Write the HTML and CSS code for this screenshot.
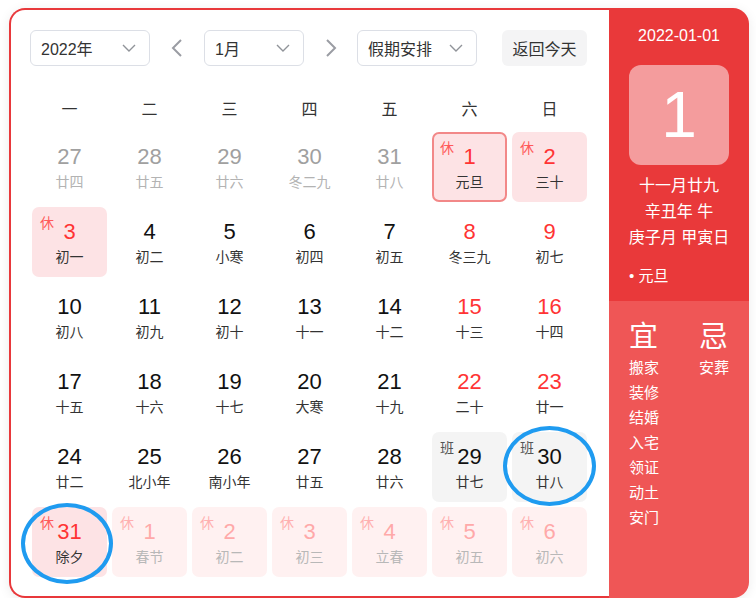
FILE: index.html
```html
<!DOCTYPE html>
<html lang="zh-CN">
<head>
<meta charset="utf-8">
<title>万年历</title>
<link rel="stylesheet" href="styles.css">
</head>
<body>
<div class="calendar">
  <div class="main">
    <div class="toolbar">
      <div class="select sel-year"><span>2022年</span><svg class="chev" width="14" height="8" viewBox="0 0 14 8"><path d="M1 1 L7 7 L13 1" fill="none" stroke="#909399" stroke-width="1.4"/></svg></div>
      <div class="arrow"><svg width="12" height="18" viewBox="0 0 12 18"><path d="M10 1 L2 9 L10 17" fill="none" stroke="#9a9ca3" stroke-width="2"/></svg></div>
      <div class="select sel-month"><span>1月</span><svg class="chev" width="14" height="8" viewBox="0 0 14 8"><path d="M1 1 L7 7 L13 1" fill="none" stroke="#909399" stroke-width="1.4"/></svg></div>
      <div class="arrow next-arrow"><svg width="12" height="18" viewBox="0 0 12 18"><path d="M2 1 L10 9 L2 17" fill="none" stroke="#9a9ca3" stroke-width="2"/></svg></div>
      <div class="select sel-holiday"><span>假期安排</span><svg class="chev" width="14" height="8" viewBox="0 0 14 8"><path d="M1 1 L7 7 L13 1" fill="none" stroke="#909399" stroke-width="1.4"/></svg></div>
      <div class="today-btn">返回今天</div>
    </div>
    <div class="weekdays">
      <span>一</span><span>二</span><span>三</span><span>四</span><span>五</span><span>六</span><span>日</span>
    </div>
    <div class="grid">
      <div class="cell other"><div class="num">27</div><div class="lunar">廿四</div></div>
      <div class="cell other"><div class="num">28</div><div class="lunar">廿五</div></div>
      <div class="cell other"><div class="num">29</div><div class="lunar">廿六</div></div>
      <div class="cell other"><div class="num">30</div><div class="lunar">冬二九</div></div>
      <div class="cell other"><div class="num">31</div><div class="lunar">廿八</div></div>
      <div class="cell rest selected"><span class="tag">休</span><div class="num red">1</div><div class="lunar">元旦</div></div>
      <div class="cell rest"><span class="tag">休</span><div class="num red">2</div><div class="lunar">三十</div></div>

      <div class="cell rest"><span class="tag">休</span><div class="num red">3</div><div class="lunar">初一</div></div>
      <div class="cell"><div class="num">4</div><div class="lunar">初二</div></div>
      <div class="cell"><div class="num">5</div><div class="lunar">小寒</div></div>
      <div class="cell"><div class="num">6</div><div class="lunar">初四</div></div>
      <div class="cell"><div class="num">7</div><div class="lunar">初五</div></div>
      <div class="cell"><div class="num red">8</div><div class="lunar">冬三九</div></div>
      <div class="cell"><div class="num red">9</div><div class="lunar">初七</div></div>

      <div class="cell"><div class="num">10</div><div class="lunar">初八</div></div>
      <div class="cell"><div class="num">11</div><div class="lunar">初九</div></div>
      <div class="cell"><div class="num">12</div><div class="lunar">初十</div></div>
      <div class="cell"><div class="num">13</div><div class="lunar">十一</div></div>
      <div class="cell"><div class="num">14</div><div class="lunar">十二</div></div>
      <div class="cell"><div class="num red">15</div><div class="lunar">十三</div></div>
      <div class="cell"><div class="num red">16</div><div class="lunar">十四</div></div>

      <div class="cell"><div class="num">17</div><div class="lunar">十五</div></div>
      <div class="cell"><div class="num">18</div><div class="lunar">十六</div></div>
      <div class="cell"><div class="num">19</div><div class="lunar">十七</div></div>
      <div class="cell"><div class="num">20</div><div class="lunar">大寒</div></div>
      <div class="cell"><div class="num">21</div><div class="lunar">十九</div></div>
      <div class="cell"><div class="num red">22</div><div class="lunar">二十</div></div>
      <div class="cell"><div class="num red">23</div><div class="lunar">廿一</div></div>

      <div class="cell"><div class="num">24</div><div class="lunar">廿二</div></div>
      <div class="cell"><div class="num">25</div><div class="lunar">北小年</div></div>
      <div class="cell"><div class="num">26</div><div class="lunar">南小年</div></div>
      <div class="cell"><div class="num">27</div><div class="lunar">廿五</div></div>
      <div class="cell"><div class="num">28</div><div class="lunar">廿六</div></div>
      <div class="cell work"><span class="tag">班</span><div class="num">29</div><div class="lunar">廿七</div></div>
      <div class="cell work"><span class="tag">班</span><div class="num">30</div><div class="lunar">廿八</div></div>

      <div class="cell rest"><span class="tag">休</span><div class="num red">31</div><div class="lunar">除夕</div></div>
      <div class="cell rest next"><span class="tag">休</span><div class="num">1</div><div class="lunar">春节</div></div>
      <div class="cell rest next"><span class="tag">休</span><div class="num">2</div><div class="lunar">初二</div></div>
      <div class="cell rest next"><span class="tag">休</span><div class="num">3</div><div class="lunar">初三</div></div>
      <div class="cell rest next"><span class="tag">休</span><div class="num">4</div><div class="lunar">立春</div></div>
      <div class="cell rest next"><span class="tag">休</span><div class="num">5</div><div class="lunar">初五</div></div>
      <div class="cell rest next"><span class="tag">休</span><div class="num">6</div><div class="lunar">初六</div></div>

      <div class="ring ring-a"></div>
      <div class="ring ring-b"></div>
    </div>
  </div>
  <div class="side">
    <div class="side-top">
      <div class="date">2022-01-01</div>
      <div class="bigday">1</div>
      <div class="lunar-info">
        <div>十一月廿九</div>
        <div>辛丑年 牛</div>
        <div>庚子月 甲寅日</div>
      </div>
      <div class="festival">• 元旦</div>
    </div>
    <div class="side-bottom">
      <div class="col">
        <div class="head">宜</div>
        <div class="item">搬家</div>
        <div class="item">装修</div>
        <div class="item">结婚</div>
        <div class="item">入宅</div>
        <div class="item">领证</div>
        <div class="item">动土</div>
        <div class="item">安门</div>
      </div>
      <div class="col">
        <div class="head">忌</div>
        <div class="item">安葬</div>
      </div>
    </div>
  </div>
</div>
</body>
</html>
```
FILE: styles.css
```css
* { box-sizing: border-box; }
html, body { margin: 0; padding: 0; background: #fff; }
body {
  font-family: "Liberation Sans", "Noto Sans CJK SC", sans-serif;
  color: #333;
}
.calendar {
  display: flex;
  width: 740px;
  height: 590px;
  margin: 8px 0 0 9px;
  border-radius: 16px;
  box-shadow: 0 2px 12px rgba(0, 0, 0, 0.08);
}
.main {
  width: 600px;
  flex-shrink: 0;
  border: 2px solid #e8383b;
  border-right: none;
  border-radius: 16px 0 0 16px;
  padding: 20px 0 19px 19px;
  background: #fff;
}
.toolbar {
  display: flex;
  align-items: center;
  height: 36px;
  margin-bottom: 22px;
}
.select {
  flex-shrink: 0;
  height: 36px;
  border: 1px solid #dcdfe6;
  border-radius: 6px;
  display: flex;
  align-items: center;
  justify-content: space-between;
  padding: 0 13px 0 10px;
  font-size: 16px;
  color: #333;
}
.sel-year { width: 120px; }
.sel-month { width: 100px; }
.sel-holiday { width: 120px; }
.arrow {
  flex-shrink: 0;
  width: 54px;
  height: 36px;
  display: flex;
  align-items: center;
  justify-content: center;
}
.arrow.next-arrow { width: 53px; }
.today-btn {
  flex-shrink: 0;
  margin-left: 25px;
  width: 85px;
  height: 36px;
  border-radius: 6px;
  background: #f4f4f5;
  display: flex;
  align-items: center;
  justify-content: center;
  font-size: 16px;
  color: #333;
}
.weekdays {
  display: grid;
  grid-template-columns: repeat(7, 75px);
  column-gap: 5px;
  height: 40px;
  margin: 0 0 4px 2px;
  align-items: center;
  font-size: 16px;
  color: #333;
  text-align: center;
}
.grid {
  position: relative;
  display: grid;
  grid-template-columns: repeat(7, 75px);
  grid-auto-rows: 70px;
  gap: 5px;
  margin-left: 2px;
}
.cell {
  position: relative;
  border-radius: 7px;
  padding-top: 12px;
  text-align: center;
}
.num {
  font-size: 22px;
  line-height: 26px;
  color: #111;
}
.lunar {
  margin-top: 2px;
  font-size: 14px;
  line-height: 20px;
  color: #333;
}
.num.red { color: #ff3434; }
.other .num { color: #a0a0a0; }
.other .lunar { color: #b3b3b3; }
.tag {
  position: absolute;
  left: 8px;
  top: 7px;
  font-size: 14px;
  line-height: 18px;
  color: #ff5a5a;
}
.rest { background: #fde3e5; }
.selected { border: 2px solid #f28888; padding-top: 10px; }
.selected .tag { left: 6px; top: 5px; }
.work { background: #f4f4f4; }
.work .tag { color: #555; }
.next { background: #fff1f1; }
.next .num { color: #ffa9a9; }
.next .lunar { color: #b8b8b8; }
.next .tag { color: #ffb0b0; }
.ring {
  position: absolute;
  border: 4px solid #1f9bf0;
  border-radius: 50%;
  pointer-events: none;
}
.ring-a { left: 471px; top: 294px; width: 93px; height: 80px; }
.ring-b { left: -11px; top: 371px; width: 92px; height: 81px; }

.side {
  width: 140px;
  flex-shrink: 0;
  display: flex;
  flex-direction: column;
  border-radius: 0 16px 16px 0;
  overflow: hidden;
  color: #fff;
}
.side-top {
  height: 293px;
  flex-shrink: 0;
  background: #e9393a;
  padding: 18px 20px 0;
  text-align: center;
}
.date { font-size: 16px; line-height: 20px; }
.bigday {
  margin-top: 19px;
  width: 100px;
  height: 100px;
  border-radius: 12px;
  background: rgba(255, 255, 255, 0.5);
  font-size: 64px;
  line-height: 100px;
  text-align: center;
}
.lunar-info {
  margin: 8px -10px 0;
  font-size: 16px;
  line-height: 26px;
  white-space: nowrap;
}
.festival {
  margin-top: 15px;
  font-size: 15px;
  line-height: 20px;
  text-align: left;
}
.side-bottom {
  flex: 1;
  background: #ef5656;
  padding: 18px 0 0 20px;
  display: flex;
}
.col { width: 70px; flex-shrink: 0; }
.col + .col { width: 50px; }
.head { font-size: 29px; line-height: 36px; }
.item { font-size: 15px; line-height: 25px; }
```
